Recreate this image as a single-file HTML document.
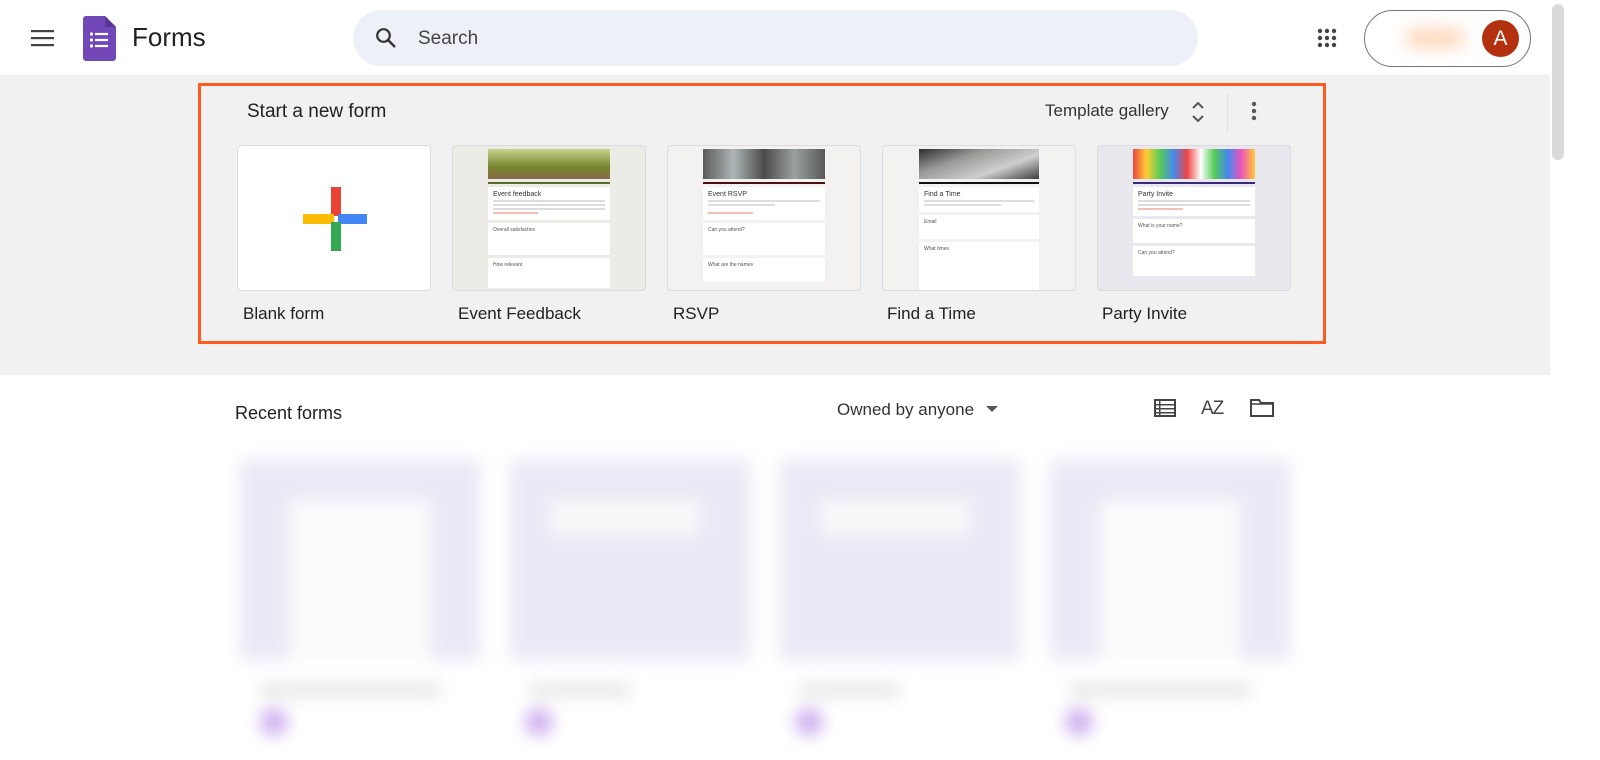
<!DOCTYPE html>
<html><head><meta charset="utf-8"><style>
*{box-sizing:border-box;margin:0;padding:0}
body{width:1600px;height:760px;overflow:hidden;background:#fff;font-family:"Liberation Sans",Arial,sans-serif;color:#202124;position:relative}
.abs{position:absolute}
.band{left:0;top:75px;width:1550px;height:300px;background:#f1f1f1}
.box{left:198px;top:83px;width:1128px;height:261px;border:3px solid #ff5a1f}
.card{width:194px;height:146px;border:1px solid #dadce0;border-radius:4px;background:#fff;overflow:hidden}
.lbl{font-size:17px;color:#202124}
.doc{position:absolute;left:50%;transform:translateX(-50%);top:3px;width:122px}
.img{height:30px}
.sec{background:#fff;margin-top:3px;padding:4px 5px;font-size:5px;color:#555}
.sec b{display:block;font-size:7px;font-weight:normal;color:#333;margin-bottom:2px}
.ln{height:2px;background:#ddd;margin:2px 0}
.blur{filter:blur(8px)}
</style></head><body>
<svg class="abs" style="left:31px;top:29px" width="24" height="18"><rect y="1" width="23" height="2.2" fill="#444"/><rect y="8" width="23" height="2.2" fill="#444"/><rect y="15" width="23" height="2.2" fill="#444"/></svg>
<svg class="abs" style="left:83px;top:16px" width="33" height="45" viewBox="0 0 33 45"><path d="M3 0h19l11 11v31a3 3 0 0 1-3 3H3a3 3 0 0 1-3-3V3a3 3 0 0 1 3-3z" fill="#7248b9"/><path d="M22 0l11 11H22z" fill="#5a3596"/><g fill="#fff"><circle cx="8.5" cy="18" r="1.6"/><circle cx="8.5" cy="24" r="1.6"/><circle cx="8.5" cy="30" r="1.6"/><rect x="12" y="16.9" width="13" height="2.2"/><rect x="12" y="22.9" width="13" height="2.2"/><rect x="12" y="28.9" width="13" height="2.2"/></g></svg>
<div class="abs" style="left:132px;top:22px;font-size:26px;color:#202124">Forms</div>
<div class="abs" style="left:353px;top:10px;width:845px;height:56px;border-radius:28px;background:#edf1f7"></div>
<svg class="abs" style="left:374px;top:26px" width="24" height="24" viewBox="0 0 24 24"><circle cx="9.5" cy="9.5" r="6.3" fill="none" stroke="#333" stroke-width="2.2"/><path d="M14 14l7 7" stroke="#333" stroke-width="2.4"/></svg>
<div class="abs" style="left:418px;top:28px;font-size:19px;color:#444">Search</div>
<svg class="abs" style="left:1317px;top:28px" width="20" height="20"><g fill="#444"><circle cx="3" cy="3" r="2.2"/><circle cx="10" cy="3" r="2.2"/><circle cx="17" cy="3" r="2.2"/><circle cx="3" cy="10" r="2.2"/><circle cx="10" cy="10" r="2.2"/><circle cx="17" cy="10" r="2.2"/><circle cx="3" cy="17" r="2.2"/><circle cx="10" cy="17" r="2.2"/><circle cx="17" cy="17" r="2.2"/></g></svg>
<div class="abs" style="left:1364px;top:10px;width:167px;height:57px;border:1px solid #777;border-radius:29px"></div>
<div class="abs blur" style="left:1405px;top:28px;width:60px;height:20px;border-radius:10px;background:#fdd9bd"></div>
<div class="abs" style="left:1482px;top:20px;width:37px;height:37px;border-radius:50%;background:#b3310f;color:#fff;font-size:21px;text-align:center;line-height:37px">A</div>
<div class="abs" style="left:1552px;top:4px;width:12px;height:156px;border-radius:6px;background:#dadada"></div>
<div class="abs band"></div>
<div class="abs" style="left:247px;top:101px;font-size:19px">Start a new form</div>
<div class="abs" style="left:1045px;top:101px;font-size:17px;color:#333">Template gallery</div>
<svg class="abs" style="left:1191px;top:101px" width="14" height="22"><path d="M2 7l5-5 5 5M2 15l5 5 5-5" fill="none" stroke="#555" stroke-width="2"/></svg>
<div class="abs" style="left:1227px;top:94px;width:1px;height:38px;background:#ddd"></div>
<svg class="abs" style="left:1251px;top:101px" width="6" height="20"><g fill="#555"><circle cx="3" cy="3" r="2.2"/><circle cx="3" cy="10" r="2.2"/><circle cx="3" cy="17" r="2.2"/></g></svg>
<div class="abs box"></div>

<div class="abs card" style="left:237px;top:145px">
<svg width="194" height="146"><rect x="93" y="41" width="10" height="29" fill="#ea4335"/><rect x="65" y="68" width="31" height="10" fill="#fbbc04"/><rect x="100" y="68" width="29" height="10" fill="#4285f4"/><rect x="93" y="76" width="10" height="29" fill="#34a853"/></svg></div>
<div class="abs card" style="left:452px;top:145px;background:#ecebe5"><div class="doc"><div class="img" style="background:linear-gradient(#c6d48e,#76852e 60%,#8a6b49)"></div><div style="height:2px;background:#5c6b2e;margin-top:3px"></div><div class="sec"><b>Event feedback</b><div class="ln"></div><div class="ln"></div><div class="ln"></div><div class="ln" style="background:#f3c0b8;width:40%"></div></div><div class="sec" style="height:32px">Overall satisfaction</div><div class="sec" style="height:30px">How relevant</div></div></div>
<div class="abs card" style="left:667px;top:145px;background:#f3f2f0"><div class="doc"><div class="img" style="background:linear-gradient(90deg,#5c5c5c,#aeb5b6,#4c4b4a,#9aa0a0,#595959)"></div><div style="height:2px;background:#4b1212;margin-top:3px"></div><div class="sec"><b>Event RSVP</b><div class="ln"></div><div class="ln" style="width:60%"></div><div class="ln" style="background:#f3c0b8;width:40%;margin-top:6px"></div></div><div class="sec" style="height:32px">Can you attend?</div><div class="sec" style="height:24px">What are the names</div></div></div>
<div class="abs card" style="left:882px;top:145px;background:#f3f2f0"><div class="doc" style="width:120px"><div class="img" style="background:linear-gradient(160deg,#2e2e2e,#9a9897,#cfcfcf,#3d3d3d)"></div><div style="height:2px;background:#111;margin-top:3px"></div><div class="sec"><b>Find a Time</b><div class="ln"></div><div class="ln" style="width:70%"></div></div><div class="sec" style="height:24px">Email</div><div class="sec" style="height:50px">What times</div></div></div>
<div class="abs card" style="left:1097px;top:145px;background:#e9e8ee"><div class="doc"><div class="img" style="background:linear-gradient(90deg,#e44,#fc3,#5c5,#48e,#e44,#fff,#5c5,#48e,#e5b,#fc3)"></div><div style="height:2px;background:#3b2a7a;margin-top:3px"></div><div class="sec"><b>Party Invite</b><div class="ln"></div><div class="ln"></div><div class="ln" style="background:#f3c0b8;width:40%"></div></div><div class="sec" style="height:24px">What is your name?</div><div class="sec" style="height:30px">Can you attend?</div></div></div>

<div class="abs lbl" style="left:243px;top:304px">Blank form</div>
<div class="abs lbl" style="left:458px;top:304px">Event Feedback</div>
<div class="abs lbl" style="left:673px;top:304px">RSVP</div>
<div class="abs lbl" style="left:887px;top:304px">Find a Time</div>
<div class="abs lbl" style="left:1102px;top:304px">Party Invite</div>

<div class="abs" style="left:235px;top:403px;font-size:18px">Recent forms</div>
<div class="abs" style="left:837px;top:400px;font-size:17px;color:#333">Owned by anyone</div>
<svg class="abs" style="left:986px;top:405px" width="12" height="8"><path d="M0 1h12L6 7z" fill="#555"/></svg>
<svg class="abs" style="left:1154px;top:399px" width="22" height="18"><rect x="1" y="1" width="20" height="16" fill="none" stroke="#444" stroke-width="2"/><g fill="#444"><rect x="1" y="5" width="20" height="1.5"/><rect x="1" y="9" width="20" height="1.5"/><rect x="1" y="13" width="20" height="1.5"/><rect x="5" y="1" width="1.5" height="16"/></g></svg>
<div class="abs" style="left:1201px;top:398px;font-size:19px;color:#444;letter-spacing:-1px">AZ</div>
<svg class="abs" style="left:1249px;top:398px" width="26" height="20"><path d="M2 2h8l2 3h12v13H2z" fill="none" stroke="#444" stroke-width="2"/><path d="M2 6h22" stroke="#444" stroke-width="1.5"/></svg>

<div class="abs blur" style="left:230px;top:450px;width:1080px;height:300px">
<div class="abs" style="left:10px;top:10px;width:240px;height:200px;background:#ece8f6"><div class="abs" style="left:50px;top:40px;width:140px;height:160px;background:#fbfbfb"></div></div>
<div class="abs" style="left:280px;top:10px;width:240px;height:200px;background:#ece8f6"><div class="abs" style="left:40px;top:40px;width:150px;height:35px;background:#f8f8f8"></div></div>
<div class="abs" style="left:550px;top:10px;width:240px;height:200px;background:#ece8f6"><div class="abs" style="left:40px;top:40px;width:150px;height:35px;background:#f8f8f8"></div></div>
<div class="abs" style="left:820px;top:10px;width:240px;height:200px;background:#ece8f6"><div class="abs" style="left:50px;top:40px;width:140px;height:160px;background:#fbfbfb"></div></div>
<div class="abs" style="left:30px;top:235px;width:180px;height:10px;background:#ddd"></div>
<div class="abs" style="left:300px;top:235px;width:100px;height:10px;background:#ddd"></div>
<div class="abs" style="left:570px;top:235px;width:100px;height:10px;background:#ddd"></div>
<div class="abs" style="left:840px;top:235px;width:180px;height:10px;background:#ddd"></div>
<div class="abs" style="left:30px;top:258px;width:28px;height:28px;border-radius:50%;background:#cfb0ef"></div>
<div class="abs" style="left:295px;top:258px;width:28px;height:28px;border-radius:50%;background:#cfb0ef"></div>
<div class="abs" style="left:565px;top:258px;width:28px;height:28px;border-radius:50%;background:#cfb0ef"></div>
<div class="abs" style="left:835px;top:258px;width:28px;height:28px;border-radius:50%;background:#cfb0ef"></div>
</div>
</body></html>
